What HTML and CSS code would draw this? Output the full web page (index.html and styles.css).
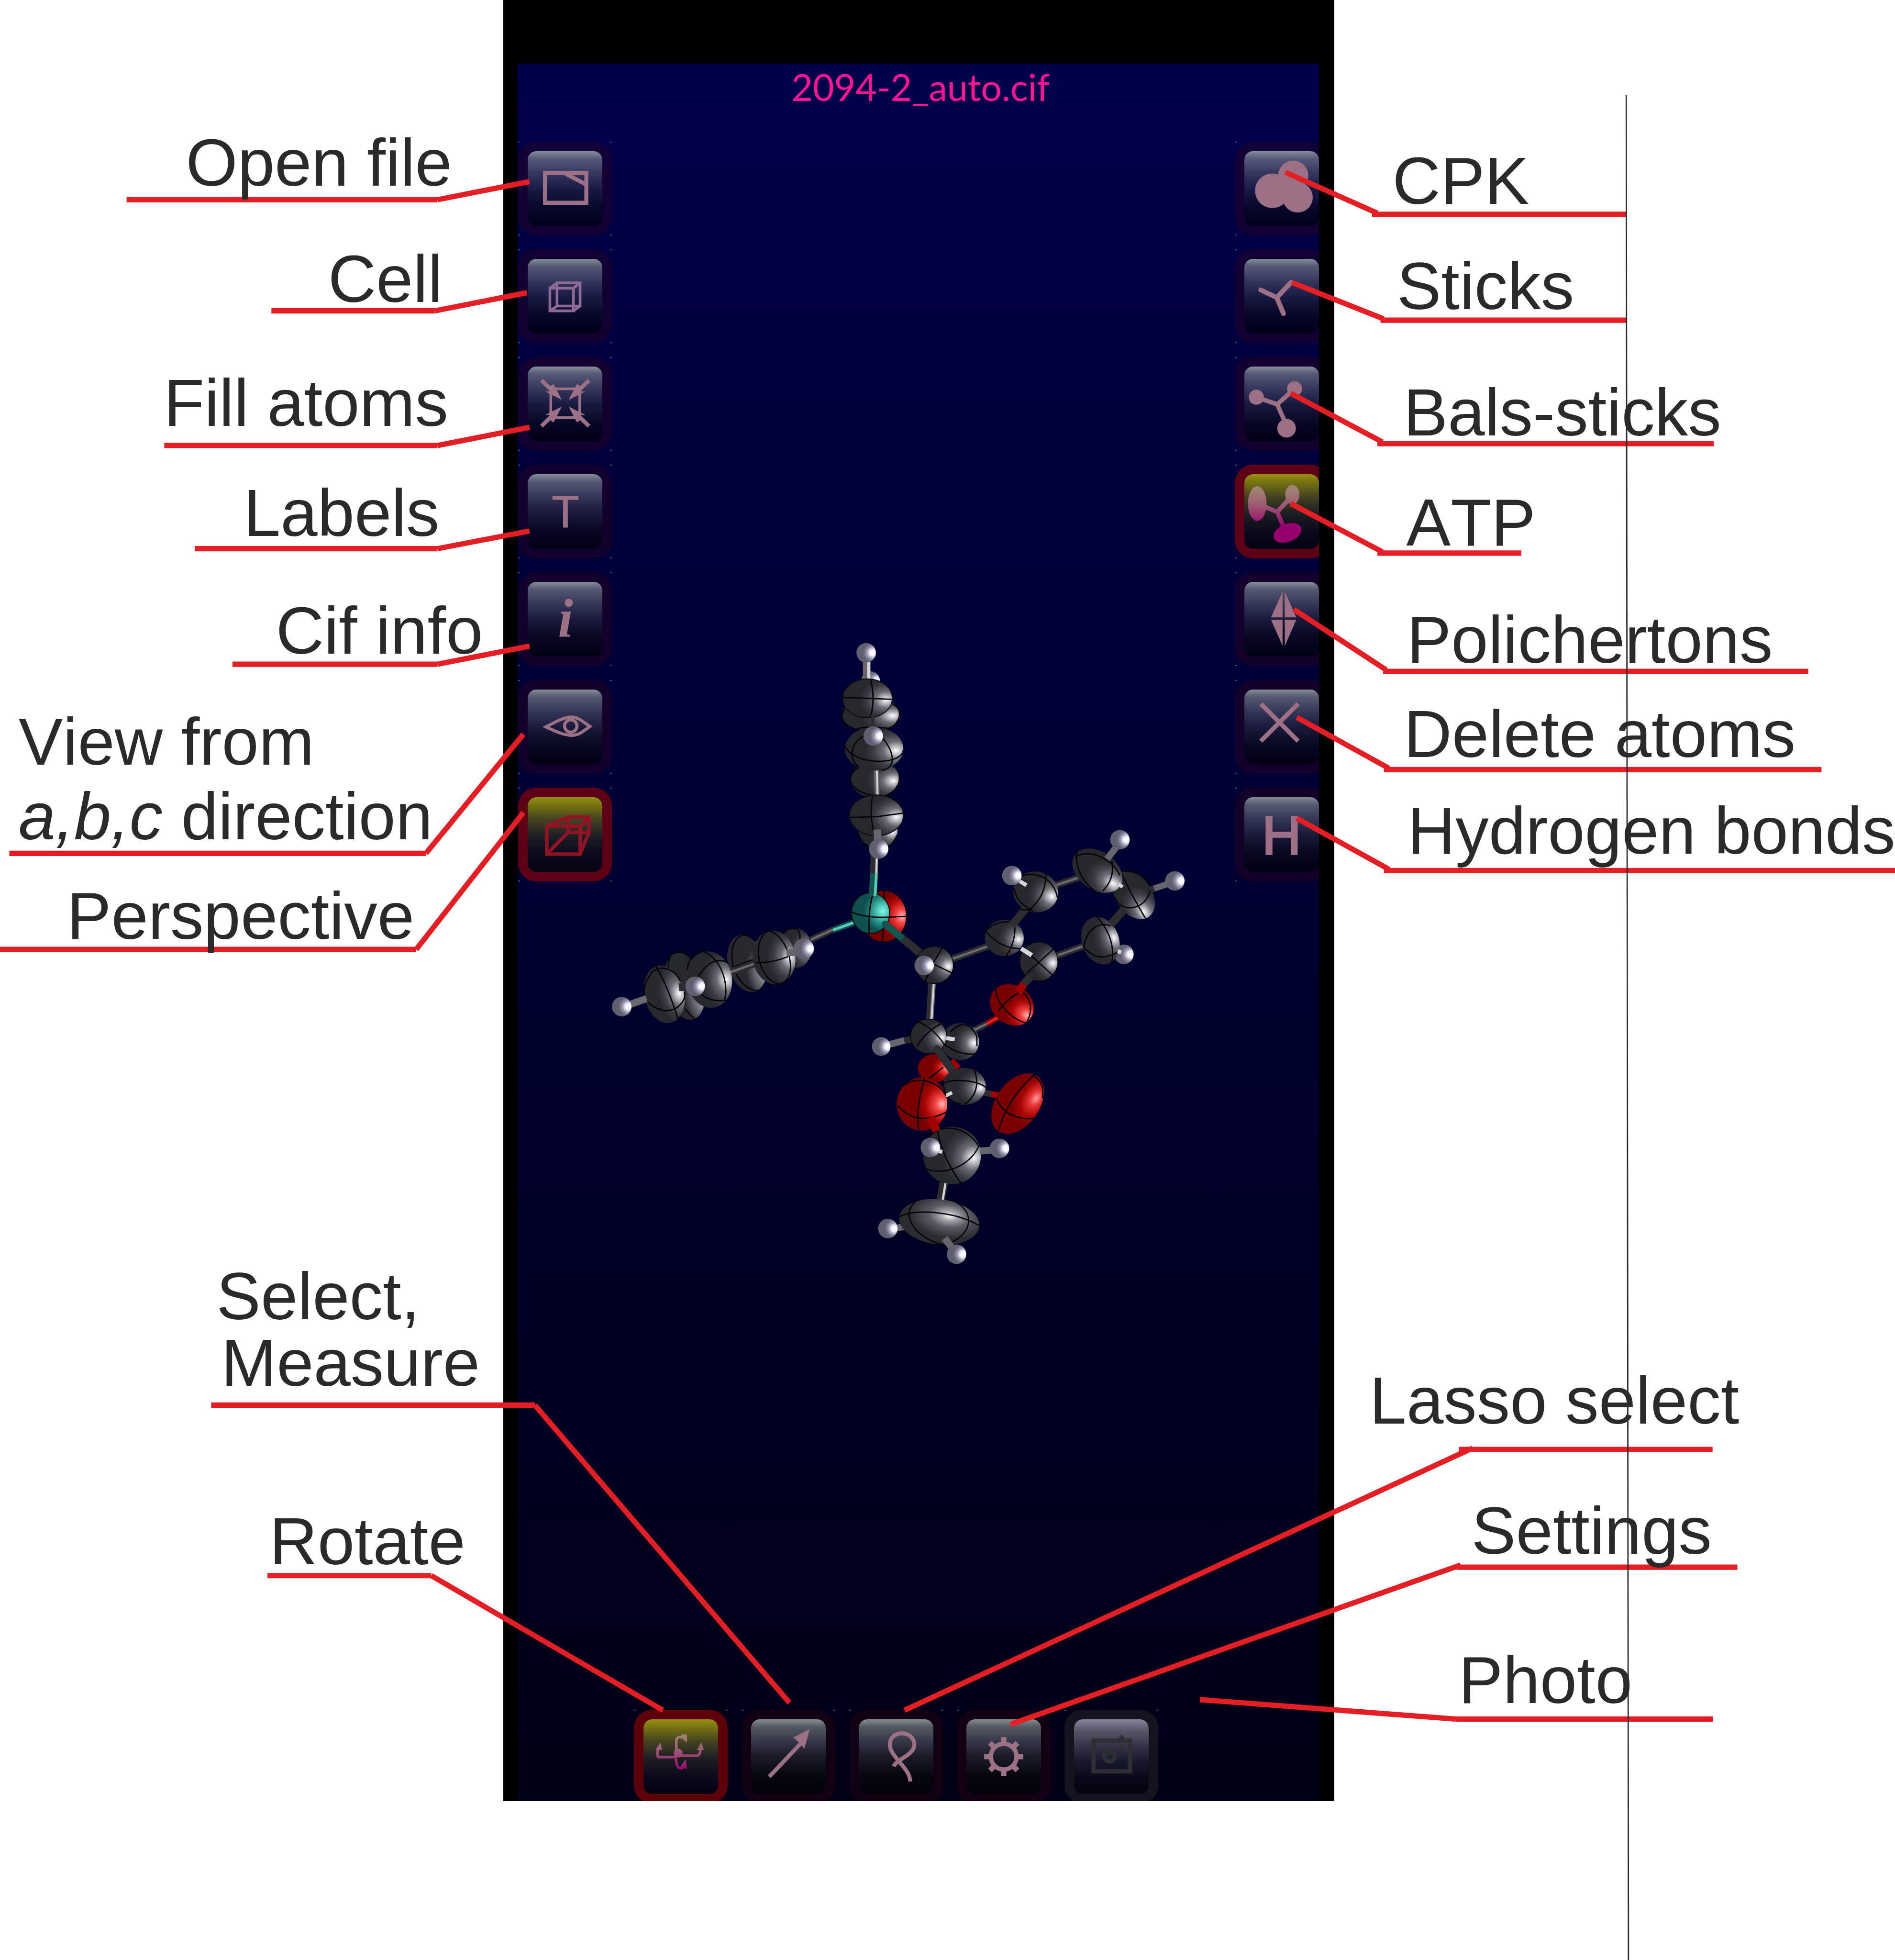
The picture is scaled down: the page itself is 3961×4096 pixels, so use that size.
FILE: index.html
```html
<!DOCTYPE html>
<html lang="en">
<head>
<meta charset="utf-8">
<title>Crystal structure viewer: controls</title>
<link rel="stylesheet" href="styles.css">
</head>
<body>
<main class="sheet">

  <section class="phone">
    <div class="screen">
      <svg class="molecule" viewBox="1169 144 1809 3923" role="img" aria-label="Thermal ellipsoid model">
        <defs>
          <radialGradient id="gc" cx=".87" cy=".54" r=".6"><stop offset="0" stop-color="#fff"/><stop offset=".14" stop-color="#c4c4cc"/><stop offset=".36" stop-color="#6a6a73"/><stop offset=".65" stop-color="#3a3a42"/><stop offset=".9" stop-color="#27272e"/></radialGradient>
          <radialGradient id="gt" cx=".62" cy=".34" r=".5" gradientTransform="rotate(8 .6 .3)"><stop offset="0" stop-color="#fff"/><stop offset=".2" stop-color="#a8a8b0"/><stop offset=".5" stop-color="#5a5a62"/><stop offset="1" stop-color="#2b2b32"/></radialGradient>
          <radialGradient id="gd" cx=".9" cy=".75" r=".5"><stop offset="0" stop-color="#d8d8e0"/><stop offset=".3" stop-color="#85858e"/><stop offset="1" stop-color="#27272e"/></radialGradient>
          <radialGradient id="gh" cx=".84" cy=".5" r=".5"><stop offset="0" stop-color="#fff"/><stop offset=".3" stop-color="#f4f4ff"/><stop offset=".65" stop-color="#9090a8"/><stop offset="1" stop-color="#605f70"/></radialGradient>
          <radialGradient id="go" cx=".9" cy=".5" r=".55"><stop offset="0" stop-color="#ffb4b4"/><stop offset=".25" stop-color="#f24444"/><stop offset=".6" stop-color="#b00606"/><stop offset=".9" stop-color="#780000"/></radialGradient>
          <radialGradient id="gr" cx=".72" cy=".78" r=".5"><stop offset="0" stop-color="#ff9c9c"/><stop offset=".25" stop-color="#e83434"/><stop offset=".6" stop-color="#a40404"/><stop offset=".9" stop-color="#780000"/></radialGradient>
          <radialGradient id="gp" cx=".82" cy=".45" r=".5"><stop offset="0" stop-color="#7dfbe8"/><stop offset=".3" stop-color="#52c8b8"/><stop offset=".7" stop-color="#1f807a"/><stop offset="1" stop-color="#0f504e"/></radialGradient>
        </defs>

        <!-- upper phenyl ring -->
        <circle class="h" cx="1966" cy="1537" r="21"/>
        <path class="lh" stroke-width="17" d="M1957 1490V1535"/><path class="white" stroke-width="7" d="M1962 1490V1535"/>
        <circle class="h" cx="1956" cy="1474" r="22"/>
        <ellipse class="c" cx="1967" cy="1613" rx="66" ry="38"/>
        <path class="arc" d="M1908 1600C1890 1625 1912 1642 1932 1648M2015 1590C2040 1600 2035 1630 2008 1646"/>
        <ellipse class="c" cx="1976" cy="1760" rx="56" ry="41"/>
        <path class="arc" d="M1940 1733C1915 1745 1905 1780 1965 1795M2022 1733C2040 1755 2030 1785 2000 1796"/>
        <ellipse class="c" cx="1982" cy="1876" rx="45" ry="39"/>
        <path class="arc" d="M1937 1878Q1945 1905 1965 1912M2026 1885Q2015 1908 2005 1911"/>
        <ellipse class="c rim" cx="1959" cy="1577" rx="56" ry="44"/>
        <path class="arc" d="M1903 1575L2015 1579M1966 1534Q1977 1577 1966 1619"/>
        <ellipse class="c" cx="1974" cy="1691" rx="66" ry="49"/>
        <path class="arc" d="M1908 1684C1925 1728 2035 1730 2040 1694M1950 1662C1920 1680 1915 1715 1940 1732M1993 1667C2015 1690 2030 1735 1990 1740M1932 1647Q1955 1638 2008 1645"/>
        <path class="b" stroke-width="8" d="M1971 1614V1642"/>
        <circle class="h" cx="1972" cy="1662" r="22"/>
        <path class="lh" stroke-width="11" d="M1979 1740L1981 1800"/><path class="white" stroke-width="4" d="M1980 1740L1982 1800"/>
        <ellipse class="c rim" cx="1979" cy="1841" rx="61" ry="46"/>
        <path class="arc" d="M1918 1846L1980 1844L2041 1836M1970 1799Q1963 1840 1973 1876"/>
        <path class="b" stroke-width="18" d="M1975 1930L1974 1972"/><path class="white" stroke-width="5" d="M1980 1930L1979 1972"/>
        <path class="lh" stroke-width="17" d="M1981 1873L1983 1904"/>
        <circle class="h" cx="1984" cy="1917" r="22"/>

        <!-- phosphorus with its oxygen -->
        <ellipse class="o rim" cx="1996" cy="2069" rx="51" ry="58"/>
        <path class="arc" d="M1996 2011Q1999 2060 1992 2127M2008 2071L2047 2069"/>
        <path class="b" stroke-width="14" d="M1881 2099L1831 2122"/><path class="s" d="M1881 2099L1831 2122"/>
        <path class="pb" stroke-width="14" d="M1937 2080L1881 2100"/><path class="ps" d="M1937 2080L1881 2100"/>
        <ellipse class="p rim" cx="1966" cy="2062" rx="43" ry="46"/>
        <path class="pb" stroke-width="18" d="M1974 1972L1971 2024"/><path class="ps" d="M1979 1972L1976 2024"/>
        <path class="arc" d="M1923 2060Q1960 2074 2009 2071M1970 2023Q1960 2060 1963 2107"/>
        <path class="b" stroke-width="18" d="M2033 2115L2080 2154"/>
        <path class="pb" stroke-width="16" stroke-linecap="round" d="M1999 2087L2033 2115"/>

        <!-- left phenyl ring -->
        <ellipse class="c" cx="1796" cy="2141" rx="37" ry="45"/>
        <path class="arc" d="M1764 2106Q1780 2092 1802 2099Q1810 2112 1804 2140"/>
        <ellipse class="d" cx="1687" cy="2175" rx="43" ry="66" transform="rotate(-15 1687 2175)"/>
        <path class="arc" d="M1705 2125C1670 2090 1645 2130 1655 2180C1665 2215 1690 2240 1716 2236M1655 2184L1700 2167"/>
        <path class="b" stroke-width="16" d="M1650 2195L1712 2173"/><path class="s" d="M1650 2195L1712 2173"/>
        <ellipse class="c" cx="1748" cy="2162" rx="48" ry="61" transform="rotate(-8 1748 2162)"/>
        <path class="arc" d="M1736 2102C1700 2115 1705 2205 1757 2222C1810 2215 1780 2110 1736 2102M1707 2173Q1740 2176 1780 2160"/>
        <path class="lh" stroke-width="16" d="M1776 2152L1797 2150"/>
        <circle class="h" cx="1815" cy="2142" r="23"/>
        <ellipse class="d" cx="1546" cy="2227" rx="44" ry="77" transform="rotate(-14 1546 2227)"/>
        <path class="arc" d="M1560 2164C1535 2140 1505 2140 1510 2195M1548 2278Q1560 2295 1573 2304"/>
        <ellipse class="c" cx="1602" cy="2212" rx="51" ry="64" transform="rotate(-8 1602 2212)"/>
        <path class="arc" d="M1552 2190C1555 2160 1575 2140 1595 2151C1635 2175 1645 2230 1636 2258M1577 2205C1600 2170 1620 2162 1645 2174M1584 2246Q1610 2265 1641 2258"/>
        <ellipse class="c" cx="1500" cy="2245" rx="45" ry="66" transform="rotate(-12 1500 2245)"/>
        <path class="arc" d="M1480 2180Q1508 2225 1532 2305M1537 2217C1520 2180 1485 2180 1471 2197C1440 2240 1455 2272 1500 2282C1530 2284 1550 2260 1546 2240"/>
        <path class="b" stroke-width="18" d="M1533 2229L1552 2228"/>
        <circle class="h" cx="1570" cy="2227" r="22"/>
        <path class="lh" stroke-width="16" d="M1420 2269L1460 2255"/><path class="s" d="M1420 2269L1460 2255"/>
        <circle class="h" cx="1404" cy="2273" r="22"/>

        <!-- benzo ring on the right -->
        <path class="b" stroke-width="15" d="M2148 2166L2236 2135M2381 2000L2444 1979M2450 2135L2381 2160"/>
        <path class="s" d="M2148 2166L2236 2135M2381 2000L2444 1979M2450 2135L2381 2160"/>
        <path class="b" stroke-width="17" d="M2105 2216L2099 2310"/><path class="lh" stroke-width="9" d="M2109 2216L2103 2310"/><path class="white" stroke-width="4" d="M2109 2216L2103 2310"/>
        <ellipse class="c rim" cx="2110" cy="2179" rx="43" ry="42"/>
        <path class="arc" d="M2129 2138L2110 2170L2089 2216M2110 2178L2152 2198"/>
        <circle class="h" cx="2087" cy="2180" r="22"/>
        <ellipse class="c" cx="2339" cy="2014" rx="51" ry="46" transform="rotate(10 2339 2014)"/>
        <path class="arc" d="M2307 1978C2340 1965 2380 1985 2388 2027M2362 1973Q2362 2025 2323 2056M2290 2005Q2295 2040 2335 2058"/>
        <path class="white" stroke-width="9" d="M2303 1990L2318 1999"/>
        <circle class="h" cx="2285" cy="1977" r="22"/>
        <ellipse class="c" cx="2268" cy="2118" rx="44" ry="41"/>
        <path class="arc" d="M2226 2103Q2262 2145 2311 2142M2291 2080Q2296 2125 2272 2159M2226 2103Q2245 2078 2290 2082"/>
        <path class="b" stroke-width="18" d="M2285 2090L2316 2052"/><path class="arc" d="M2292 2053L2326 2055"/>
        <ellipse class="c" cx="2560" cy="2021" rx="60" ry="41" transform="rotate(55 2560 2021)"/>
        <path class="arc" d="M2531 1970Q2560 2030 2587 2074M2517 2025C2530 2065 2590 2055 2598 2008M2536 1967Q2580 1965 2599 2005"/>
        <ellipse class="c" cx="2478" cy="1966" rx="62" ry="43" transform="rotate(35 2478 1966)"/>
        <path class="arc" d="M2434 1918C2422 1955 2450 2000 2476 2014M2428 1934C2470 1915 2515 1945 2529 1977M2511 1944Q2518 1985 2490 2012"/>
        <path class="lh" stroke-width="15" d="M2500 1940L2522 1911"/>
        <circle class="h" cx="2529" cy="1896" r="22"/>
        <path class="white" stroke-width="8" d="M2526 1996L2535 2003"/>
        <path class="lh" stroke-width="14" d="M2601 2008L2640 1995"/><path class="b" stroke-width="14" d="M2596 2010L2606 2006"/>
        <circle class="h" cx="2653" cy="1989" r="22"/>
        <circle class="h" cx="2538" cy="2155" r="22"/>
        <ellipse class="c" cx="2485" cy="2124" rx="42" ry="55" transform="rotate(-20 2485 2124)"/>
        <path class="arc" d="M2477 2070Q2522 2120 2510 2177M2447 2138C2455 2095 2485 2080 2508 2091M2447 2138Q2480 2178 2527 2148"/>
        <path class="b" stroke-width="18" d="M2538 2054L2508 2088"/>
        <path class="white" stroke-width="9" d="M2524 2148L2532 2150"/>
        <ellipse class="c rim" cx="2346" cy="2171" rx="43" ry="44"/>
        <path class="arc" d="M2311 2142L2379 2204M2379 2143L2318 2198"/>
        <path class="white" stroke-width="10" d="M2306 2142L2330 2157"/>

        <!-- lactone part -->
        <path class="b" stroke-width="18" d="M2327 2206L2310 2224"/>
        <path class="ob" stroke-width="13" d="M2260 2294L2228 2312"/><path class="os" d="M2260 2294L2228 2312"/>
        <path class="b" stroke-width="14" d="M2228 2312L2195 2328"/><path class="s" d="M2228 2312L2195 2328"/>
        <ellipse class="o" cx="2285" cy="2269" rx="52" ry="44" transform="rotate(35 2285 2269)"/>
        <path class="arc" d="M2248 2232C2250 2270 2290 2305 2318 2310M2255 2282Q2275 2255 2300 2242M2310 2240Q2340 2270 2318 2310"/>
        <path class="ob" stroke-width="17" d="M2312 2222L2299 2241"/>
        <ellipse class="o" cx="2110" cy="2412" rx="37" ry="32"/><path class="ob" stroke-width="14" d="M2148 2395L2164 2412"/>
        <path class="arc" d="M2095 2438L2130 2410"/>
        <ellipse class="c" cx="2168" cy="2352" rx="43" ry="42"/>
        <path class="arc" d="M2158 2320Q2185 2300 2206 2340V2362M2133 2358Q2165 2383 2204 2380M2187 2318Q2178 2308 2158 2320L2146 2330"/>
        <path class="lh" stroke-width="15" d="M2006 2359L2044 2349"/><path class="b" stroke-width="15" d="M2042 2350L2060 2346"/>
        <circle class="h" cx="1990" cy="2363" r="21"/>
        <ellipse class="c rim" cx="2097" cy="2340" rx="41" ry="39"/>
        <path class="arc" d="M2071 2306Q2108 2320 2134 2361M2124 2312Q2090 2330 2070 2364"/>
        <path class="white" stroke-width="9" d="M2137 2344L2156 2347"/>
        <path class="b" stroke-width="18" stroke-linecap="round" d="M2116 2369L2148 2414"/>

        <!-- ester part -->
        <path class="b" stroke-width="14" d="M2220 2467L2240 2470"/><path class="ob" stroke-width="14" d="M2238 2470L2256 2474"/>
        <ellipse class="c" cx="2177" cy="2453" rx="49" ry="42"/>
        <path class="arc" d="M2128 2450C2140 2432 2215 2440 2226 2456M2200 2415Q2218 2465 2178 2494M2130 2442Q2130 2485 2170 2493"/>
        <ellipse class="r" cx="2298" cy="2492" rx="76" ry="49" transform="rotate(-55 2298 2492)"/>
        <path class="arc" d="M2337 2426Q2275 2480 2255 2552M2250 2480C2265 2520 2310 2530 2336 2525M2330 2428Q2360 2440 2354 2480"/>
        <path class="white" stroke-width="8" d="M2136 2474L2150 2467"/>
        <ellipse class="o" cx="2082" cy="2493" rx="57" ry="60"/>
        <path class="arc" d="M2088 2434Q2068 2500 2074 2552M2027 2496Q2070 2546 2137 2511M2039 2452C2070 2428 2120 2440 2136 2474"/>
        <ellipse class="c" cx="2150" cy="2609" rx="65" ry="65"/>
        <path class="arc" d="M2117 2552Q2128 2615 2172 2674M2090 2639C2130 2655 2190 2635 2210 2588M2098 2564C2130 2535 2185 2545 2210 2588"/>
        <path class="ob" stroke-width="19" d="M2101 2523L2115 2554"/>
        <path class="white" stroke-width="9" d="M2115 2598L2128 2601"/>
        <circle class="h" cx="2101" cy="2591" r="22"/>
        <path class="lh" stroke-width="16" d="M2213 2599L2240 2597"/>
        <circle class="h" cx="2257" cy="2593" r="22"/>
        <path class="b" stroke-width="19" d="M2131 2671L2124 2712"/><path class="white" stroke-width="5" d="M2135 2672L2129 2709"/>
        <path class="lh" stroke-width="15" d="M2024 2773L2042 2770"/>
        <circle class="h" cx="2005" cy="2774" r="22"/>
        <ellipse class="t" cx="2121" cy="2759" rx="91" ry="51" transform="rotate(7 2121 2759)"/>
        <path class="arc" d="M2030 2748C2060 2728 2160 2735 2210 2767M2073 2709C2030 2735 2060 2795 2131 2811M2148 2709C2210 2735 2195 2795 2131 2811"/>
        <path class="lh" stroke-width="16" d="M2133 2796L2152 2820"/>
        <circle class="h" cx="2160" cy="2832" r="22"/>
      </svg>

      <h1 class="file-name">2094-2_auto.cif</h1>

      <div class="side-bars">
        <ul class="bar">
          <li><button type="button" aria-label="Open file"><svg viewBox="22 22 168 168"><path stroke-width="9" d="M61 71H154V138H61ZM106 72L152 96"/></svg></button></li>
          <li><button type="button" aria-label="Cell"><svg viewBox="22 22 168 168" class="violet"><path stroke-width="6" d="M72 88H125V139H72ZM88 76H140V128H88ZM72 88L88 76M125 88L140 76M125 139L140 128M72 139L88 128"/></svg></button></li>
          <li><button type="button" aria-label="Fill atoms"><svg viewBox="22 22 168 168"><path stroke-width="6" d="M74 72H139V137H74Z"/><path stroke-width="9" d="M53 53L80 79M160 53L133 79M53 156L80 130M160 156L133 130"/><path class="fill" d="M99 97L61 78L74 78L71 68L80 61ZM114 97L152 78L139 78L142 68L133 61ZM99 112L61 131L74 131L71 141L80 148ZM114 112L152 131L139 131L142 141L133 148Z"/></svg></button></li>
          <li><button type="button" aria-label="Labels"><svg viewBox="22 22 168 168"><text x="107" y="142" font-size="102" class="medium">T</text></svg></button></li>
          <li><button type="button" aria-label="Cif info"><svg viewBox="22 22 168 168"><text x="107" y="146" font-size="122" class="info">i</text></svg></button></li>
          <li><button type="button" aria-label="View direction"><svg viewBox="22 22 168 168"><path stroke-width="7" d="M63 106C88 93 104 84 121 84S149 97 162 105C147 116 137 125 121 125S88 118 63 106Z"/><circle stroke-width="7" cx="119" cy="104" r="14"/></svg></button></li>
          <li><button type="button" class="on" aria-label="Perspective"><svg viewBox="22 22 168 168" class="red"><path stroke-width="8" d="M65 87H140V150H65ZM113 67H160V101H113ZM65 87L113 67M140 87L160 67M140 150L160 101M65 150L113 101"/></svg></button></li>
        </ul>

        <ul class="bar bar-right">
          <li><button type="button" aria-label="CPK"><svg viewBox="22 22 168 168"><g class="fill"><circle cx="85" cy="111" r="39"/><circle cx="132" cy="77" r="34"/><circle cx="142" cy="126" r="34"/></g></svg></button></li>
          <li><button type="button" aria-label="Sticks"><svg viewBox="22 22 168 168"><path stroke-width="11" stroke-linecap="round" d="M59 92L95 109L127 75M95 109L110 145"/></svg></button></li>
          <li><button type="button" aria-label="Balls and sticks"><svg viewBox="22 22 168 168"><path stroke-width="10" d="M49 91L96 107L135 72M96 107L117 155"/><g class="fill"><circle cx="49" cy="91" r="17"/><circle cx="135" cy="72" r="17"/><circle cx="117" cy="161" r="21"/></g></svg></button></li>
          <li><button type="button" class="on" aria-label="ATP"><svg viewBox="22 22 168 168"><defs><linearGradient id="pink" gradientUnits="userSpaceOnUse" x1="0" y1="55" x2="0" y2="140"><stop offset="0" stop-color="#a08574"/><stop offset=".45" stop-color="#9c5872"/><stop offset="1" stop-color="#95006c"/></linearGradient></defs><path class="pink-line" stroke-width="10" d="M51 88L96 107L130 70M96 107L112 145"/><g class="pink"><ellipse cx="51" cy="88" rx="21" ry="39"/><ellipse cx="130" cy="68" rx="16" ry="22"/><ellipse cx="119" cy="154" rx="33" ry="20" transform="rotate(-22 119 154)"/></g></svg></button></li>
          <li><button type="button" aria-label="Polyhedra"><svg viewBox="22 22 168 168"><path class="fill" d="M108 44V102H82ZM113 44V102H139ZM108 166V107H82ZM113 166V107H139Z"/></svg></button></li>
          <li><button type="button" aria-label="Delete atoms"><svg viewBox="22 22 168 168"><path stroke-width="10" d="M59 54L143 138M143 54L59 138"/></svg></button></li>
          <li><button type="button" aria-label="Hydrogen bonds"><svg viewBox="22 22 168 168"><text x="106" y="150" font-size="122" class="heavy">H</text></svg></button></li>
        </ul>
      </div>

      <ul class="bar bar-bottom">
        <li><button type="button" class="on" aria-label="Rotate"><svg viewBox="22 22 168 168"><path class="pink-line" stroke-width="6" d="M56 84Q50 107 57 107H90L104 104H144Q151 100 150 84M96 106V68Q98 60 112 63M95 110Q96 131 105 132Q114 132 116 120"/><g class="pink"><circle cx="100" cy="98" r="10"/><path d="M49 91L60 74L64 91ZM142 91L152 74L158 91ZM107 56L120 56L120 74L112 68ZM105 128L117 112L120 134Z"/></g></svg></button></li>
        <li><button type="button" aria-label="Select and measure"><svg viewBox="22 22 168 168"><path stroke-width="9" d="M63 151L134 76"/><path class="fill" d="M154 44L117 63L130 74L142 88Z"/></svg></button></li>
        <li><button type="button" aria-label="Lasso select"><svg viewBox="22 22 168 168"><path stroke-width="9" d="M101 128C106 112 147 103 147 79C147 46 92 44 92 79C92 107 137 130 138 162"/></svg></button></li>
        <li><button type="button" aria-label="Settings"><svg viewBox="22 22 168 168"><circle stroke-width="10" cx="106" cy="106" r="29"/><path stroke-width="12" d="M106 62V76M106 136V150M62 106H76M136 106H150M75 75L85 85M127 127L137 137M137 75L127 85M85 127L75 137"/></svg></button></li>
        <li><button type="button" class="off" aria-label="Photo" disabled><svg viewBox="22 22 168 168" class="gray"><path stroke-width="10" d="M66 70H148V139H66Z"/><circle stroke-width="9" cx="102" cy="105" r="12"/><path class="fill" d="M122 66L129 56L136 66ZM129 80L135 87L129 94L123 87Z"/></svg></button></li>
      </ul>
    </div>
  </section>

  <svg class="leaders" viewBox="0 0 4280 4426" preserveAspectRatio="none" aria-hidden="true">
    <g class="leader">
      <path d="M286 451H988M988 451L1196 410"/>
      <path d="M613 702H982M982 702L1190 661"/>
      <path d="M371 1006H988M988 1006L1196 965"/>
      <path d="M440 1239H988M988 1239L1196 1199"/>
      <path d="M525 1500H988M988 1500L1196 1459"/>
      <path d="M21 1927H962M962 1927L1182 1658"/>
      <path d="M0 2144H940M940 2144L1182 1835"/>
      <path d="M477 3173H1208M1208 3173L1783 3845"/>
      <path d="M604 3558H974M974 3558L1497 3862"/>
      <path d="M3673 484H3099M3110 481L2903 389"/>
      <path d="M3673 723H3118M3125 720L2918 638"/>
      <path d="M3871 1002H3111M3122 998L2915 888"/>
      <path d="M3436 1249H3111M3122 1246L2915 1137"/>
      <path d="M4084 1516H3124M3131 1513L2922 1376"/>
      <path d="M4114 1738H3126M3137 1735L2929 1620"/>
      <path d="M4280 1966H3126M3137 1963L2929 1848"/>
      <path d="M3868 3273H3295M3326 3270L2043 3862"/>
      <path d="M3924 3539H3290M3299 3534L2282 3894"/>
      <path d="M3869 3882H3288M3288 3882L2710 3838"/>
    </g>
    <path class="guide" d="M3673 215L3678 4426"/>
  </svg>

  <p class="label open">Open file</p>
  <p class="label cell">Cell</p>
  <p class="label fill-atoms">Fill atoms</p>
  <p class="label labels">Labels</p>
  <p class="label cif">Cif info</p>
  <p class="label view">View from<br><em>a,b,c</em> direction</p>
  <p class="label perspective">Perspective</p>
  <p class="label select">Select,<span class="indent">Measure</span></p>
  <p class="label rotate">Rotate</p>
  <p class="label cpk">CPK</p>
  <p class="label sticks">Sticks</p>
  <p class="label balls">Bals-sticks</p>
  <p class="label atp">ATP</p>
  <p class="label poly">Polichertons</p>
  <p class="label delete">Delete atoms</p>
  <p class="label hydrogen">Hydrogen bonds</p>
  <p class="label lasso">Lasso select</p>
  <p class="label settings">Settings</p>
  <p class="label photo">Photo</p>
</main>
</body>
</html>
```

FILE: styles.css
```css
* { box-sizing: border-box; }

body {
  margin: 0;
  background: #fff;
  color: #2b2a29;
  font-family: "Liberation Sans", Arial, sans-serif;
}

.sheet {
  position: relative;
  width: 100%;
  aspect-ratio: 3961 / 4096;
  overflow: hidden;
}

/* device */
.phone {
  width: 43.84%;
  height: 91.9%;
  margin-left: 26.56%;
  padding: 133px 32px 0 30px;
  background: #000;
}

.screen {
  position: relative;
  display: flex;
  flex-direction: column;
  height: 100%;
  overflow: hidden;
  background: linear-gradient(#00004b, #00003c 22%, #000033 45%, #000024 72%, #000016);
}

.molecule {
  position: absolute;
  inset: 0;
  width: 100%;
  height: 100%;
}

.molecule path { fill: none; }
.c { fill: url(#gc); }
.d { fill: url(#gd); }
.t { fill: url(#gt); }
.h { fill: url(#gh); }
.o { fill: url(#go); }
.r { fill: url(#gr); }
.p { fill: url(#gp); }
.rim { stroke: #0a0a0e; stroke-width: 2; }
.arc { stroke: #050508; stroke-width: 3; }
.b { stroke: #2d2d31; }
.s { stroke: #6c6c70; stroke-width: 5; }
.lh { stroke: #66666c; }
.white { stroke: #d6d6da; }
.ob { stroke: #a00000; }
.os { stroke: #f03030; stroke-width: 4; }
.pb { stroke: #11574f; }
.ps { stroke: #5cc8b8; stroke-width: 6; }

.file-name {
  position: relative;
  margin: 4px 0 71px;
  padding-left: 10px;
  color: #ff1493;
  font: 400 77px/88px Lato, sans-serif;
  text-align: center;
}

/* toolbars */
.side-bars {
  position: relative;
  display: flex;
  justify-content: space-between;
}

.bar {
  display: flex;
  flex-direction: column;
  gap: 29px;
  margin: 0;
  padding: 0 0 0 1px;
  list-style: none;
}

.bar-right { margin-right: -20px; }

.bar-bottom {
  position: relative;
  flex-direction: row;
  margin: auto 0 -5px 242px;
}

.bar li {
  width: 196px;
  height: 196px;
  background:
    linear-gradient(#4c4c6a, #4c4c6a) 0 0 / 4px 2px,
    linear-gradient(#4c4c6a, #4c4c6a) 100% 0 / 4px 2px,
    linear-gradient(#4c4c6a, #4c4c6a) 0 100% / 4px 2px,
    linear-gradient(#4c4c6a, #4c4c6a) 100% 100% / 4px 2px;
  background-repeat: no-repeat;
}

.bar button {
  display: block;
  width: 100%;
  height: 100%;
  padding: 0;
  border: 20px solid rgba(66, 0, 16, .28);
  border-radius: 38px;
  background: linear-gradient(
    rgba(200, 218, 203, .66),
    rgba(150, 156, 156, .57) 10%,
    rgba(104, 108, 120, .5) 30%,
    rgba(72, 74, 70, .36) 50%,
    rgba(16, 16, 10, .45) 75%,
    rgba(0, 0, 0, .62)) padding-box;
}

.bar .on {
  border-color: rgba(155, 0, 0, .6);
  background: linear-gradient(#979010, #737012 12%, #444222 30%, #1e1e24 52%, #0c0a1c 75%, #030212) padding-box;
}

.bar .off {
  border-color: #14141f;
  background: linear-gradient(#85859a, #595869 15%, #363548 35%, #1a1a2e 55%, #080818 80%, #03030e) padding-box;
}

.bar svg {
  display: block;
  width: 100%;
  height: 100%;
  fill: none;
  stroke: #9c7085;
}

.bar .violet { stroke: #8e6a96; }
.bar .red { stroke: #8f1426; }
.bar .gray { stroke: #2e2e34; }
.bar .fill { fill: #9c7085; stroke: none; }
.bar .gray .fill { fill: #2e2e34; }
.bar .pink { fill: url(#pink); stroke: none; }
.bar .pink-line { stroke: url(#pink); }

.bar text {
  fill: #9c7085;
  stroke: none;
  font-family: "Liberation Sans", Arial, sans-serif;
  text-anchor: middle;
}

.bar .medium { stroke: #9c7085; stroke-width: 1; }
.bar .heavy { stroke: #9c7085; stroke-width: 4; }

.bar .info {
  font-family: "Liberation Serif", "Times New Roman", serif;
  font-style: italic;
  font-weight: 700;
}

/* leader lines */
.leaders {
  position: absolute;
  inset: 0;
  width: 100%;
  height: 100%;
  pointer-events: none;
}

.leader { fill: none; stroke: #e31e24; stroke-width: 12; }
.guide { fill: none; stroke: #2b2a29; stroke-width: 3; }

/* callout texts, placed on the drawing */
.label {
  position: absolute;
  margin: 0;
  font-size: 139px;
  line-height: 139px;
  font-kerning: none;
  white-space: nowrap;
}

.indent { display: block; padding-left: 10px; }

.open { left: 9.81%; top: 6.59%; }
.cell { left: 17.31%; top: 12.52%; }
.fill-atoms { left: 8.64%; top: 18.85%; }
.labels { left: 12.85%; top: 24.47%; }
.cif { left: 14.56%; top: 30.46%; }
.view { left: .98%; top: 35.94%; line-height: 156px; }
.perspective { left: 3.53%; top: 45.03%; }
.select { left: 11.42%; top: 64.44%; }
.rotate { left: 14.22%; top: 76.94%; }
.cpk { left: 73.48%; top: 7.52%; }
.sticks { left: 73.71%; top: 12.89%; }
.balls { left: 74.06%; top: 19.33%; }
.atp { left: 74.21%; top: 24.95%; }
.poly { left: 74.24%; top: 30.94%; }
.delete { left: 74.08%; top: 35.74%; }
.hydrogen { left: 74.27%; top: 40.67%; }
.lasso { left: 72.27%; top: 69.76%; }
.settings { left: 77.65%; top: 76.39%; }
.photo { left: 76.97%; top: 84.01%; }
```
